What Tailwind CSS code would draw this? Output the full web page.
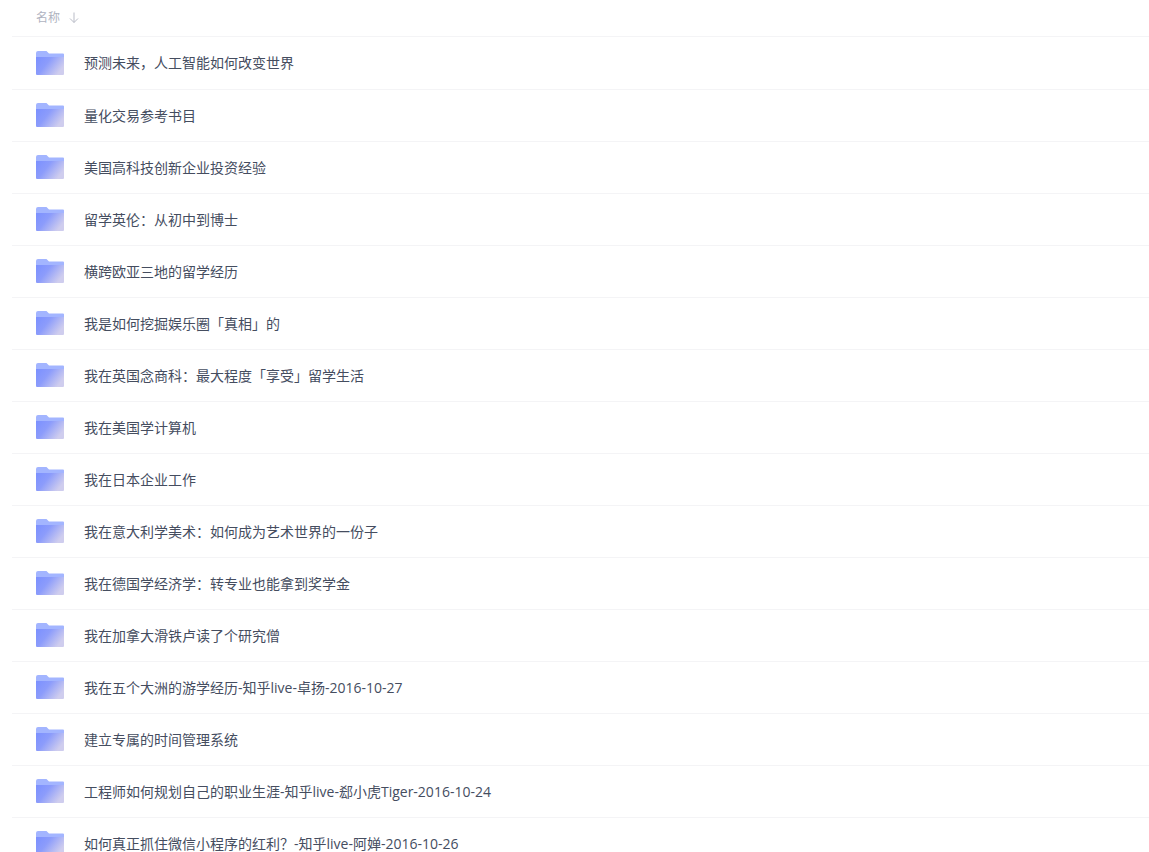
<!DOCTYPE html>
<html lang="en">
<head>
    <meta charset="UTF-8" />
    <title>文件列表</title>
    <script src="https://cdn.jsdelivr.net/npm/@tailwindcss/browser@4"></script>
</head>
<body class="bg-white h-[852px] overflow-hidden font-['Open_Sans','Noto_Sans_CJK_SC',sans-serif] text-sm text-[#454d5f]">
    <!-- gradient has to live in a rendered svg, display:none kills it -->
    <svg class="absolute w-0 h-0">
        <defs>
            <linearGradient id="folderFront" x1="0" y1="0" x2="1" y2="0.5">
                <stop offset="0" stop-color="#7b90ff" />
                <stop offset="0.45" stop-color="#8c9cfb" />
                <stop offset="1" stop-color="#cfcdee" />
            </linearGradient>
            <symbol id="folder" viewBox="0 0 28 25">
                <path d="M0 2a2 2 0 0 1 2-2h8.500l2.500 2.500H27a1 1 0 0 1 1 1V10H0z" fill="#a3b5ff" />
                <path d="M0 6h28V23a1 1 0 0 1-1 1H1a1 1 0 0 1-1-1z" fill="url(#folderFront)" />
            </symbol>
        </defs>
    </svg>

    <div class="ml-3">
        <div class="h-[37px] pl-6 flex items-center gap-2 border-b border-[#f4f4f6] text-xs text-[#afb3bf]">
            <span>名称</span>
            <svg class="w-3 h-3" viewBox="0 0 12 12" fill="none" stroke="#b9bcc7" stroke-width="1">
                <path d="M6 0.500v10M2 6.500L6 10.500 10 6.500" />
            </svg>
        </div>

        <ul>
            <li class="h-[53px] pl-6 flex items-center gap-5 border-b border-[#f4f4f6]"><svg class="w-7 h-[25px] mt-[1px]"><use href="#folder" /></svg><span>预测未来，人工智能如何改变世界</span></li>
            <li class="h-[52px] pl-6 flex items-center gap-5 border-b border-[#f4f4f6]"><svg class="w-7 h-[25px]"><use href="#folder" /></svg><span>量化交易参考书目</span></li>
            <li class="h-[52px] pl-6 flex items-center gap-5 border-b border-[#f4f4f6]"><svg class="w-7 h-[25px]"><use href="#folder" /></svg><span>美国高科技创新企业投资经验</span></li>
            <li class="h-[52px] pl-6 flex items-center gap-5 border-b border-[#f4f4f6]"><svg class="w-7 h-[25px]"><use href="#folder" /></svg><span>留学英伦：从初中到博士</span></li>
            <li class="h-[52px] pl-6 flex items-center gap-5 border-b border-[#f4f4f6]"><svg class="w-7 h-[25px]"><use href="#folder" /></svg><span>横跨欧亚三地的留学经历</span></li>
            <li class="h-[52px] pl-6 flex items-center gap-5 border-b border-[#f4f4f6]"><svg class="w-7 h-[25px]"><use href="#folder" /></svg><span>我是如何挖掘娱乐圈「真相」的</span></li>
            <li class="h-[52px] pl-6 flex items-center gap-5 border-b border-[#f4f4f6]"><svg class="w-7 h-[25px]"><use href="#folder" /></svg><span>我在英国念商科：最大程度「享受」留学生活</span></li>
            <li class="h-[52px] pl-6 flex items-center gap-5 border-b border-[#f4f4f6]"><svg class="w-7 h-[25px]"><use href="#folder" /></svg><span>我在美国学计算机</span></li>
            <li class="h-[52px] pl-6 flex items-center gap-5 border-b border-[#f4f4f6]"><svg class="w-7 h-[25px]"><use href="#folder" /></svg><span>我在日本企业工作</span></li>
            <li class="h-[52px] pl-6 flex items-center gap-5 border-b border-[#f4f4f6]"><svg class="w-7 h-[25px]"><use href="#folder" /></svg><span>我在意大利学美术：如何成为艺术世界的一份子</span></li>
            <li class="h-[52px] pl-6 flex items-center gap-5 border-b border-[#f4f4f6]"><svg class="w-7 h-[25px]"><use href="#folder" /></svg><span>我在德国学经济学：转专业也能拿到奖学金</span></li>
            <li class="h-[52px] pl-6 flex items-center gap-5 border-b border-[#f4f4f6]"><svg class="w-7 h-[25px]"><use href="#folder" /></svg><span>我在加拿大滑铁卢读了个研究僧</span></li>
            <li class="h-[52px] pl-6 flex items-center gap-5 border-b border-[#f4f4f6]"><svg class="w-7 h-[25px]"><use href="#folder" /></svg><span>我在五个大洲的游学经历-知乎live-卓扬-2016-10-27</span></li>
            <li class="h-[52px] pl-6 flex items-center gap-5 border-b border-[#f4f4f6]"><svg class="w-7 h-[25px]"><use href="#folder" /></svg><span>建立专属的时间管理系统</span></li>
            <li class="h-[52px] pl-6 flex items-center gap-5 border-b border-[#f4f4f6]"><svg class="w-7 h-[25px]"><use href="#folder" /></svg><span>工程师如何规划自己的职业生涯-知乎live-郄小虎Tiger-2016-10-24</span></li>
            <li class="h-[52px] pl-6 flex items-center gap-5 border-b border-[#f4f4f6]"><svg class="w-7 h-[25px]"><use href="#folder" /></svg><span>如何真正抓住微信小程序的红利？-知乎live-阿婵-2016-10-26</span></li>
        </ul>
    </div>
</body>
</html>
